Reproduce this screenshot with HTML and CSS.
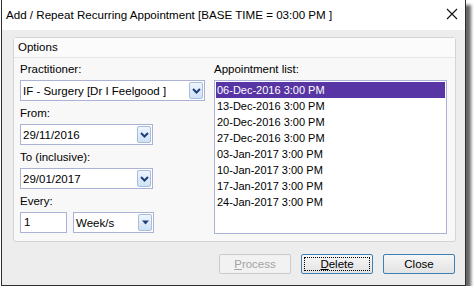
FILE: index.html
```html
<!DOCTYPE html>
<html lang="en">
<head>
    <meta charset="UTF-8">
    <title>Add / Repeat Recurring Appointment</title>
    <link rel="stylesheet" href="styles.css">
</head>
<body>
    <div class="window">
        <div class="titlebar">
            <span class="title">Add / Repeat Recurring Appointment [BASE TIME = 03:00 PM ]</span>
            <svg class="close" width="12" height="12" viewBox="0 0 12 12">
                <path d="M1 1 L11 11 M11 1 L1 11" stroke="#111" stroke-width="1.1" fill="none"/>
            </svg>
        </div>

        <div class="client">
            <div class="groupbox">
                <div class="group-header">Options</div>
                <div class="group-body">
                    <div class="col-left">
                        <label>Practitioner:</label>
                        <div class="combo combo-wide">
                            <span>IF - Surgery [Dr I Feelgood ]</span>
                            <span class="drop">
                                <svg width="9" height="6" viewBox="0 0 9 6"><path d="M1 1 L4.5 4.5 L8 1" stroke="#1f3f7a" stroke-width="2" fill="none"/></svg>
                            </span>
                        </div>

                        <label>From:</label>
                        <div class="combo combo-date">
                            <span>29/11/2016</span>
                            <span class="drop">
                                <svg width="9" height="6" viewBox="0 0 9 6"><path d="M1 1 L4.5 4.5 L8 1" stroke="#1f3f7a" stroke-width="2" fill="none"/></svg>
                            </span>
                        </div>

                        <label>To (inclusive):</label>
                        <div class="combo combo-date">
                            <span>29/01/2017</span>
                            <span class="drop">
                                <svg width="9" height="6" viewBox="0 0 9 6"><path d="M1 1 L4.5 4.5 L8 1" stroke="#1f3f7a" stroke-width="2" fill="none"/></svg>
                            </span>
                        </div>

                        <label>Every:</label>
                        <div class="every-row">
                            <div class="textbox">1</div>
                            <div class="combo combo-unit">
                                <span>Week/s</span>
                                <span class="drop">
                                    <svg width="9" height="5" viewBox="0 0 9 5"><path d="M1 0.5 L8 0.5 L4.5 4.5 Z" fill="#1f3f7a"/></svg>
                                </span>
                            </div>
                        </div>
                    </div>

                    <div class="col-right">
                        <label>Appointment list:</label>
                        <ul class="listbox">
                            <li class="selected">06-Dec-2016 3:00 PM</li>
                            <li>13-Dec-2016 3:00 PM</li>
                            <li>20-Dec-2016 3:00 PM</li>
                            <li>27-Dec-2016 3:00 PM</li>
                            <li>03-Jan-2017 3:00 PM</li>
                            <li>10-Jan-2017 3:00 PM</li>
                            <li>17-Jan-2017 3:00 PM</li>
                            <li>24-Jan-2017 3:00 PM</li>
                        </ul>
                    </div>
                </div>
            </div>

            <div class="buttons">
                <button class="btn" disabled><u>P</u>rocess</button>
                <button class="btn btn-focus"><span class="focus-rect"><u>D</u>elete</span></button>
                <button class="btn">Close</button>
            </div>
        </div>
    </div>
</body>
</html>
```

FILE: styles.css
```css
* {
    margin: 0;
    padding: 0;
    box-sizing: border-box;
}

body {
    background: #ffffff;
    font-family: 'Liberation Sans', Arial, sans-serif;
    font-size: 11px;
    color: #000;
}

/* Window frame */
.window {
    margin-left: 1px;
    width: 465px;
    height: 286px;
    border-left: 1px solid #2e2e2e;
    border-right: 1px solid #2e2e2e;
    border-bottom: 1px solid #2e2e2e;
    background: #ededed;
    box-shadow: 5px 5px 3px rgba(0, 0, 0, 0.6);
    display: flex;
    flex-direction: column;
}

.titlebar {
    height: 30px;
    background: #ffffff;
    display: flex;
    align-items: center;
    justify-content: space-between;
    padding: 0 7px 2px 4px;
}

.title {
    font-size: 11.6px;
    color: #000;
}

.client {
    flex: 1;
    padding: 7px 9px 0 11px;
}

/* Group box */
.groupbox {
    height: 205px;
    border: 1px solid #d4d4d4;
    border-radius: 3px;
    background: #f8f8f8;
}

.group-header {
    height: 20px;
    line-height: 19px;
    padding-left: 4px;
    font-size: 11.5px;
    border-bottom: 1px solid #e6e6e6;
    background: #fbfbfb;
}

.group-body {
    display: flex;
    padding: 4px 0 0 6px;
}

.col-left {
    width: 185px;
    display: flex;
    flex-direction: column;
}

.col-right {
    margin-left: 9px;
    width: 233px;
    display: flex;
    flex-direction: column;
}

label {
    height: 14px;
    line-height: 14px;
    margin-bottom: 4px;
    font-size: 11.5px;
}

.combo {
    height: 21px;
    border: 1px solid #abb2d6;
    background: #fff;
    display: flex;
    align-items: center;
    justify-content: space-between;
    padding: 0 1px 0 2px;
    margin-bottom: 5px;
    font-size: 11.5px;
}

.combo-wide { width: 185px; }
.combo-date { width: 133px; }
.combo-unit { width: 81px; margin-bottom: 0; }

.drop {
    width: 14px;
    height: 17px;
    border: 1px solid #a7bddb;
    border-radius: 2px;
    background: linear-gradient(#eef5fd, #cfe2f6);
    display: flex;
    align-items: center;
    justify-content: center;
}

.every-row {
    display: flex;
    gap: 6px;
}

.textbox {
    width: 47px;
    height: 21px;
    border: 1px solid #abb2d6;
    background: #fff;
    padding-left: 3px;
    line-height: 19px;
    font-size: 11.5px;
}

/* Appointment list */
.listbox {
    list-style: none;
    height: 154px;
    border: 1px solid #abb2d6;
    background: #fff;
    padding: 1px;
    font-size: 11px;
}

.listbox li {
    height: 16px;
    line-height: 16px;
    padding-left: 1px;
}

.listbox li.selected {
    background: #5735a4;
    color: #fff;
}

/* Dialog buttons */
.buttons {
    display: flex;
    justify-content: flex-end;
    gap: 10px;
    margin-top: 12px;
    padding-right: 1px;
}

.btn {
    width: 72px;
    height: 20px;
    border: 1px solid #3f7fb4;
    border-radius: 2px;
    background: linear-gradient(#f6f6f6, #e3e3e3);
    font-family: 'Liberation Sans', Arial, sans-serif;
    font-size: 11.5px;
    color: #000;
    display: flex;
    align-items: center;
    justify-content: center;
}

.btn:disabled {
    border-color: #cbcbcb;
    background: #f2f2f2;
    color: #a3a3a3;
}

.btn-focus {
    padding: 2px;
}

.focus-rect {
    width: 100%;
    height: 100%;
    border: 1px dotted #000;
    display: flex;
    align-items: center;
    justify-content: center;
}
```
